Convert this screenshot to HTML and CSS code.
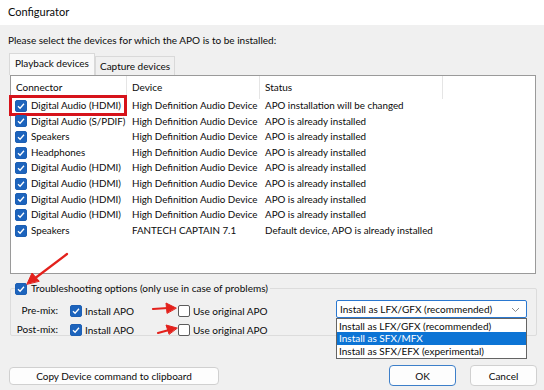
FILE: index.html
```html
<!DOCTYPE html>
<html lang="en">
<head>
    <meta charset="UTF-8">
    <title>Configurator</title>
    <link rel="stylesheet" href="styles.css">
</head>
<body>
    <div class="window">
        <div class="titlebar">Configurator</div>
        <div class="content">
            <p class="prompt">Please select the devices for which the APO is to be installed:</p>
            <div class="tabs">
                <span class="tab active">Playback devices</span>
                <span class="tab">Capture devices</span>
            </div>
            <div class="list">
                <div class="list-head">
                    <span class="col">Connector</span>
                    <span class="col">Device</span>
                    <span class="col">Status</span>
                    <span class="col"></span>
                </div>
                <div class="row marked">
                    <span class="cell"><i class="cb on"></i>Digital Audio (HDMI)</span>
                    <span class="cell">High Definition Audio Device</span>
                    <span class="cell">APO installation will be changed</span>
                    <span class="mark"></span>
                </div>
                <div class="row">
                    <span class="cell"><i class="cb on"></i>Digital Audio (S/PDIF)</span>
                    <span class="cell">High Definition Audio Device</span>
                    <span class="cell">APO is already installed</span>
                </div>
                <div class="row">
                    <span class="cell"><i class="cb on"></i>Speakers</span>
                    <span class="cell">High Definition Audio Device</span>
                    <span class="cell">APO is already installed</span>
                </div>
                <div class="row">
                    <span class="cell"><i class="cb on"></i>Headphones</span>
                    <span class="cell">High Definition Audio Device</span>
                    <span class="cell">APO is already installed</span>
                </div>
                <div class="row">
                    <span class="cell"><i class="cb on"></i>Digital Audio (HDMI)</span>
                    <span class="cell">High Definition Audio Device</span>
                    <span class="cell">APO is already installed</span>
                </div>
                <div class="row">
                    <span class="cell"><i class="cb on"></i>Digital Audio (HDMI)</span>
                    <span class="cell">High Definition Audio Device</span>
                    <span class="cell">APO is already installed</span>
                </div>
                <div class="row">
                    <span class="cell"><i class="cb on"></i>Digital Audio (HDMI)</span>
                    <span class="cell">High Definition Audio Device</span>
                    <span class="cell">APO is already installed</span>
                </div>
                <div class="row">
                    <span class="cell"><i class="cb on"></i>Digital Audio (HDMI)</span>
                    <span class="cell">High Definition Audio Device</span>
                    <span class="cell">APO is already installed</span>
                </div>
                <div class="row">
                    <span class="cell"><i class="cb on"></i>Speakers</span>
                    <span class="cell">FANTECH CAPTAIN 7.1</span>
                    <span class="cell">Default device, APO is already installed</span>
                </div>
            </div>

            <fieldset class="trouble">
                <legend><i class="cb on"></i>Troubleshooting options (only use in case of problems)</legend>
                <div class="mix-grid">
                    <span class="mix-label">Pre-mix:</span>
                    <span class="opt"><i class="cb on"></i>Install APO</span>
                    <span class="opt"><i class="cb"></i>Use original APO</span>
                    <div class="combo-wrap">
                        <div class="combo">Install as LFX/GFX (recommended)
                            <svg class="chev" width="9" height="6" viewBox="0 0 9 6"><path d="M1 1 L4.5 4.5 L8 1" fill="none" stroke="#8a8a8a" stroke-width="1"/></svg>
                        </div>
                        <ul class="popup">
                            <li>Install as LFX/GFX (recommended)</li>
                            <li class="sel">Install as SFX/MFX</li>
                            <li>Install as SFX/EFX (experimental)</li>
                        </ul>
                    </div>
                    <span class="mix-label">Post-mix:</span>
                    <span class="opt"><i class="cb on"></i>Install APO</span>
                    <span class="opt"><i class="cb"></i>Use original APO</span>
                </div>
            </fieldset>

            <div class="footer">
                <button class="btn copy">Copy Device command to clipboard</button>
                <div class="spacer"></div>
                <button class="btn ok">OK</button>
                <button class="btn">Cancel</button>
            </div>
        </div>

        <svg class="arrows" width="544" height="390" viewBox="0 0 544 390">
            <g stroke="#e3211c" stroke-width="2.2" fill="#e3211c" stroke-linecap="round">
                <line x1="67" y1="254" x2="34" y2="279"/>
                <polygon points="27,284 32,273 39,281" stroke-width="1"/>
                <line x1="153" y1="309" x2="168" y2="308"/>
                <polygon points="176,308 166,303 167,313" stroke-width="1"/>
                <line x1="158" y1="333" x2="169" y2="330"/>
                <polygon points="177,328 166,325 169,334" stroke-width="1"/>
            </g>
        </svg>
    </div>
</body>
</html>
```

FILE: styles.css
```css
body {
    margin: 0;
    font-family: Lato, 'Noto Sans', sans-serif;
    font-size: 10px;
    color: #0a0a0a;
    background: #f0f0f0;
}
.window {
    position: relative;
    width: 544px;
    height: 390px;
    overflow: hidden;
    background: #f0f0f0;
}
.titlebar {
    height: 25px;
    line-height: 24px;
    padding-left: 8px;
    background: #fff;
    font-size: 11px;
}
.content {
    padding: 0 7px 0 10px;
}
.prompt {
    margin: 8px 0 0 -2px;
    line-height: 15px;
}

/* tabs */
.tabs {
    display: flex;
    height: 21px;
    margin-top: 6px;
    align-items: flex-end;
}
.tab {
    height: 18px;
    line-height: 18px;
    padding: 0 4px;
    border: 1px solid #d9d9d9;
    border-bottom: none;
    background: #f0f0f0;
}
.tab.active {
    height: 21px;
    line-height: 19px;
    margin-left: -1px;
    padding: 0 5px;
    background: #f9f9f9;
    border-color: #d9d9d9;
}

/* device list */
.list {
    height: 197px;
    border: 1px solid #9a9a9a;
    background: #fff;
    margin-right: 1px;
}
.list-head, .row {
    display: grid;
    grid-template-columns: 116px 133px 183px 1fr;
}
.list-head {
    height: 22px;
    line-height: 23px;
}
.list-head .col {
    padding-left: 5px;
    border-right: 1px solid #e5e5e5;
}
.list-head .col:last-child {
    border-right: none;
}
.row {
    position: relative;
    height: 15.6px;
    line-height: 15.6px;
    white-space: nowrap;
    font-size: 9.8px;
}
.row .cell {
    padding-left: 5px;
    display: flex;
    align-items: center;
}
.row .cell:first-child {
    padding-left: 4px;
}
.mark {
    position: absolute;
    left: -2px;
    top: -3px;
    width: 112px;
    height: 15px;
    border: 3px solid #d6131b;
}

/* checkboxes */
.cb {
    display: inline-block;
    box-sizing: border-box;
    width: 12px;
    height: 12px;
    margin-right: 4px;
    border: 1px solid #5c5c5c;
    border-radius: 2px;
    background: #fff;
    flex: none;
    vertical-align: -2px;
}
.cb.on {
    border-color: #1d5fb3;
    background: #1d64bd url("data:image/svg+xml,%3Csvg xmlns='http://www.w3.org/2000/svg' width='10' height='10' viewBox='0 0 10 10'%3E%3Cpath d='M2 5.2 L4.1 7.2 L8 2.8' fill='none' stroke='white' stroke-width='1.3'/%3E%3C/svg%3E") center / 10px 10px no-repeat;
}

/* troubleshooting group */
.trouble {
    margin: 8px 0 0 0;
    padding: 0;
    height: 52px;
    border: 1px solid #dcdcdc;
    border-radius: 2px;
}
.trouble legend {
    padding: 0 2px 0 0;
    margin-left: 4px;
    line-height: 13px;
    display: flex;
    align-items: center;
}
.mix-grid {
    display: grid;
    grid-template-columns: 47px 120px 158px 191px;
    grid-template-rows: 19px 19px;
    margin-top: 6px;
    white-space: nowrap;
}
.mix-label {
    text-align: right;
    line-height: 19px;
}
.mix-label + .opt {
    margin-left: 12px;
}
.opt {
    display: flex;
    align-items: center;
}
.opt .cb {
    margin-right: 3px;
}
.combo-wrap {
    position: relative;
    grid-row: 1;
    grid-column: 4;
}
.combo {
    position: relative;
    box-sizing: border-box;
    height: 18px;
    line-height: 16px;
    margin-top: -1px;
    padding-left: 3px;
    border: 1px solid #2a78d0;
    border-radius: 2px;
    background: #fff;
}
.chev {
    position: absolute;
    right: 6px;
    top: 6px;
}
.popup {
    position: absolute;
    top: 17px;
    left: 0;
    width: 191px;
    box-sizing: border-box;
    margin: 0;
    padding: 1px 0;
    list-style: none;
    border: 1px solid #646464;
    background: #fff;
    z-index: 2;
}
.popup li {
    height: 12.3px;
    line-height: 12px;
    padding-left: 2px;
}
.popup li.sel {
    background: #0c74d5;
    color: #fff;
}

/* buttons */
.footer {
    display: flex;
    align-items: center;
    margin-top: 29px;
    gap: 14px;
}
.spacer {
    flex: 1;
}
.btn {
    font: inherit;
    color: #0a0a0a;
    background: #fdfdfd;
    border: 1px solid #d0d0d0;
    border-radius: 4px;
    height: 18px;
    padding: 0;
}
.btn.copy {
    width: 210px;
    margin-left: -1px;
}
.footer .btn:not(.copy) {
    width: 67px;
    height: 21px;
}
.btn.ok {
    border-color: #3d7fc9;
}
.arrows {
    position: absolute;
    left: 0;
    top: 0;
    pointer-events: none;
}
```
